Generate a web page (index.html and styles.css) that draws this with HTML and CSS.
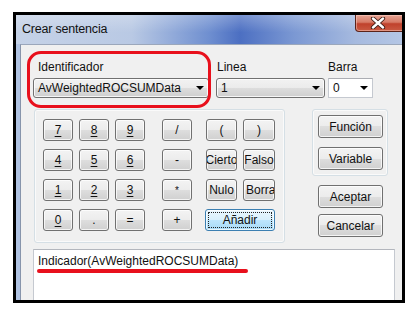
FILE: index.html
```html
<!DOCTYPE html>
<html>

<head>
  <link rel="stylesheet" href="styles.css">
</head>

<body>
  <div class="shot">
    <div class="titlebar">
      <span class="title">Crear sentencia</span>
      <div class="close">
        <svg width="16" height="12" viewBox="0 0 16 12">
          <path d="M3 1.5 L13 10.5 M13 1.5 L3 10.5" stroke="#3a1a14" stroke-width="4.2" stroke-linecap="round"/>
          <path d="M3 1.5 L13 10.5 M13 1.5 L3 10.5" stroke="#ffffff" stroke-width="2.4" stroke-linecap="round"/>
        </svg>
      </div>
    </div>

    <div class="frame">
      <div class="client">
        <div class="fields">
          <div class="field field-id">
            <span class="field-label">Identificador</span>
            <div class="combo combo-list"><span>AvWeightedROCSUMData</span><i class="arrow"></i></div>
          </div>
          <div class="field field-line">
            <span class="field-label">Linea</span>
            <div class="combo combo-list"><span>1</span><i class="arrow"></i></div>
          </div>
          <div class="field field-bar">
            <span class="field-label">Barra</span>
            <div class="combo combo-edit"><span>0</span><i class="arrow"></i></div>
          </div>
        </div>

        <div class="middle">
          <div class="group keypad">
            <div class="btn"><u>7</u></div>
            <div class="btn"><u>8</u></div>
            <div class="btn"><u>9</u></div>
            <div class="btn key-op">/</div>
            <div class="btn key-fn">(</div>
            <div class="btn">)</div>

            <div class="btn"><u>4</u></div>
            <div class="btn"><u>5</u></div>
            <div class="btn"><u>6</u></div>
            <div class="btn key-op">-</div>
            <div class="btn key-fn">Cierto</div>
            <div class="btn">Falso</div>

            <div class="btn"><u>1</u></div>
            <div class="btn"><u>2</u></div>
            <div class="btn"><u>3</u></div>
            <div class="btn key-op key-small">*</div>
            <div class="btn key-fn">Nulo</div>
            <div class="btn key-left">Borrar</div>

            <div class="btn"><u>0</u></div>
            <div class="btn">.</div>
            <div class="btn">=</div>
            <div class="btn key-op">+</div>
            <div class="btn btn-default key-add"><span class="focus">Añadir</span></div>
          </div>

          <div class="side">
            <div class="group side-group">
              <div class="btn btn-wide">Función</div>
              <div class="btn btn-wide">Variable</div>
            </div>
            <div class="dialog-buttons">
              <div class="btn btn-wide">Aceptar</div>
              <div class="btn btn-wide">Cancelar</div>
            </div>
          </div>
        </div>

        <div class="editor">
          Indicador(AvWeightedROCSUMData)
          <span class="mark-line"></span>
        </div>

        <div class="mark-box"></div>
      </div>
    </div>
  </div>
</body>

</html>
```

FILE: styles.css
```css
body {
  margin: 0;
  background: #fff;
  font-family: "Liberation Sans", Arial, sans-serif;
  font-size: 12px;
  color: #111;
}

.shot {
  display: flex;
  flex-direction: column;
  box-sizing: border-box;
  width: 392px;
  height: 291px;
  margin: 12px 0 0 13px;
  border: 3px solid #000;
  overflow: hidden;
}

/* Title bar */
.titlebar {
  display: flex;
  flex-direction: row;
  align-items: flex-start;
  height: 29px;
  flex-shrink: 0;
  background:
    linear-gradient(rgba(255, 255, 255, 0.25), rgba(255, 255, 255, 0) 60%),
    linear-gradient(to right, #c5d2e7 0%, #b9c9e4 30%, #6f8fd0 50%, #4c6fc2 58%, #7b98d3 72%, #a6badf 88%, #b4c6e5 100%);
}
.title {
  padding: 7px 0 0 6px;
  line-height: 14px;
  font-size: 12.5px;
  letter-spacing: -0.2px;
}
.close {
  display: flex;
  align-items: center;
  justify-content: center;
  box-sizing: border-box;
  width: 50px;
  height: 17px;
  margin-left: auto;
  margin-right: -3px;
  padding-right: 4px;
  border: 1px solid #5b2219;
  border-top: 0;
  border-radius: 0 0 4px 4px;
  background: linear-gradient(#e7a595 0%, #d77a66 45%, #c0412c 55%, #c95a43 100%);
  box-shadow: inset 0 0 0 1px rgba(255, 220, 210, 0.45);
}

/* Window frame and client area */
.frame {
  flex-grow: 1;
  display: flex;
  border-left: 4px solid #b0c3e2;
}
.client {
  position: relative;
  flex-grow: 1;
  box-sizing: border-box;
  padding: 14px 0 0 12px;
  border-left: 1px solid #8794ab;
  border-top: 1px solid #9ba7bb;
  background: #f0f0f0;
}

.fields {
  display: flex;
  flex-direction: row;
}
.field {
  display: flex;
  flex-direction: column;
}
.field-label {
  line-height: 16px;
  margin-bottom: 3px;
}
.field-id {
  width: 176px;
}
.field-id .field-label {
  padding-left: 5px;
}
.field-line {
  width: 109px;
  margin-left: 7px;
}
.field-line .field-label {
  padding-left: 1px;
}
.field-bar {
  width: 45px;
  margin-left: 3px;
}

.combo {
  display: flex;
  align-items: center;
  box-sizing: border-box;
  height: 20px;
  padding: 0 4px 0 4px;
  white-space: nowrap;
  overflow: hidden;
}
.combo span {
  flex-grow: 1;
}
.combo-list {
  border: 1px solid #707070;
  border-radius: 3px;
  background: linear-gradient(#f2f2f2 0%, #ebebeb 50%, #dddddd 50%, #cfcfcf 100%);
  box-shadow: inset 0 0 0 1px rgba(255, 255, 255, 0.8);
}
.combo-edit {
  border: 1px solid #c5c9d0;
  border-top-color: #abadb3;
  background: #fff;
}
.arrow {
  width: 0;
  height: 0;
  margin-left: 2px;
  border-left: 4px solid transparent;
  border-right: 4px solid transparent;
  border-top: 4px solid #000;
}

/* Keypad and side buttons */
.middle {
  display: flex;
  flex-direction: row;
  margin-top: 11px;
}
.group {
  box-sizing: border-box;
  border: 1px solid #d5dfe5;
  border-radius: 3px;
  box-shadow: inset 0 0 0 1px #fafafa;
}
.keypad {
  display: grid;
  grid-template-columns: 30px 30px 30px 41px 39px 32px;
  grid-auto-rows: 22px;
  column-gap: 6px;
  row-gap: 8px;
  align-content: start;
  width: 251px;
  height: 134px;
  margin-left: 1px;
  padding: 9px 0 0 8px;
}

.btn {
  display: flex;
  align-items: center;
  justify-content: center;
  box-sizing: border-box;
  border: 1px solid #707070;
  border-radius: 3px;
  background: linear-gradient(#f3f3f3 0%, #ececec 50%, #dedede 50%, #d0d0d0 100%);
  box-shadow: inset 0 0 0 1px rgba(255, 255, 255, 0.75);
  white-space: nowrap;
  overflow: hidden;
}
.btn u {
  text-decoration-thickness: 1px;
  text-underline-offset: 2px;
}
.key-op {
  justify-self: end;
  width: 30px;
}
.key-small {
  font-size: 10px;
}
.key-fn {
  justify-self: end;
  width: 31px;
}
.key-left {
  justify-content: flex-start;
  padding-left: 2px;
}
.key-add {
  grid-column: 5 / span 2;
  margin-left: 7px;
}
.btn-default {
  border-color: #3c7fb1;
  background: linear-gradient(#eaf6fd 0%, #d9f0fc 50%, #bee6fd 50%, #a7d9f5 100%);
  padding: 2px;
}
.focus {
  display: flex;
  align-items: center;
  justify-content: center;
  align-self: stretch;
  flex-grow: 1;
  border: 1px dotted #222;
}

.side {
  display: flex;
  flex-direction: column;
  width: 76px;
  margin-left: 27px;
}
.side-group {
  display: flex;
  flex-direction: column;
  gap: 9px;
  height: 67px;
  padding: 5px 0 0 5px;
}
.btn-wide {
  width: 65px;
  height: 23px;
}
.dialog-buttons {
  display: flex;
  flex-direction: column;
  gap: 6px;
  margin-top: 9px;
  padding-left: 6px;
}

/* Expression box */
.editor {
  position: relative;
  box-sizing: border-box;
  width: 362px;
  height: 70px;
  margin-top: 6px;
  padding: 4px 4px;
  line-height: 15px;
  border: 1px solid #c5c9d0;
  border-top-color: #b3b6bd;
  background: #fff;
}

/* Red annotations drawn over the dialog */
.mark-line {
  position: absolute;
  left: 3px;
  top: 19px;
  width: 211px;
  height: 4px;
  border-radius: 2px;
  background: #e8101c;
}
.mark-box {
  position: absolute;
  left: 6px;
  top: 6px;
  width: 184px;
  height: 57px;
  box-sizing: border-box;
  border: 3px solid #e8101c;
  border-radius: 14px;
}
```
